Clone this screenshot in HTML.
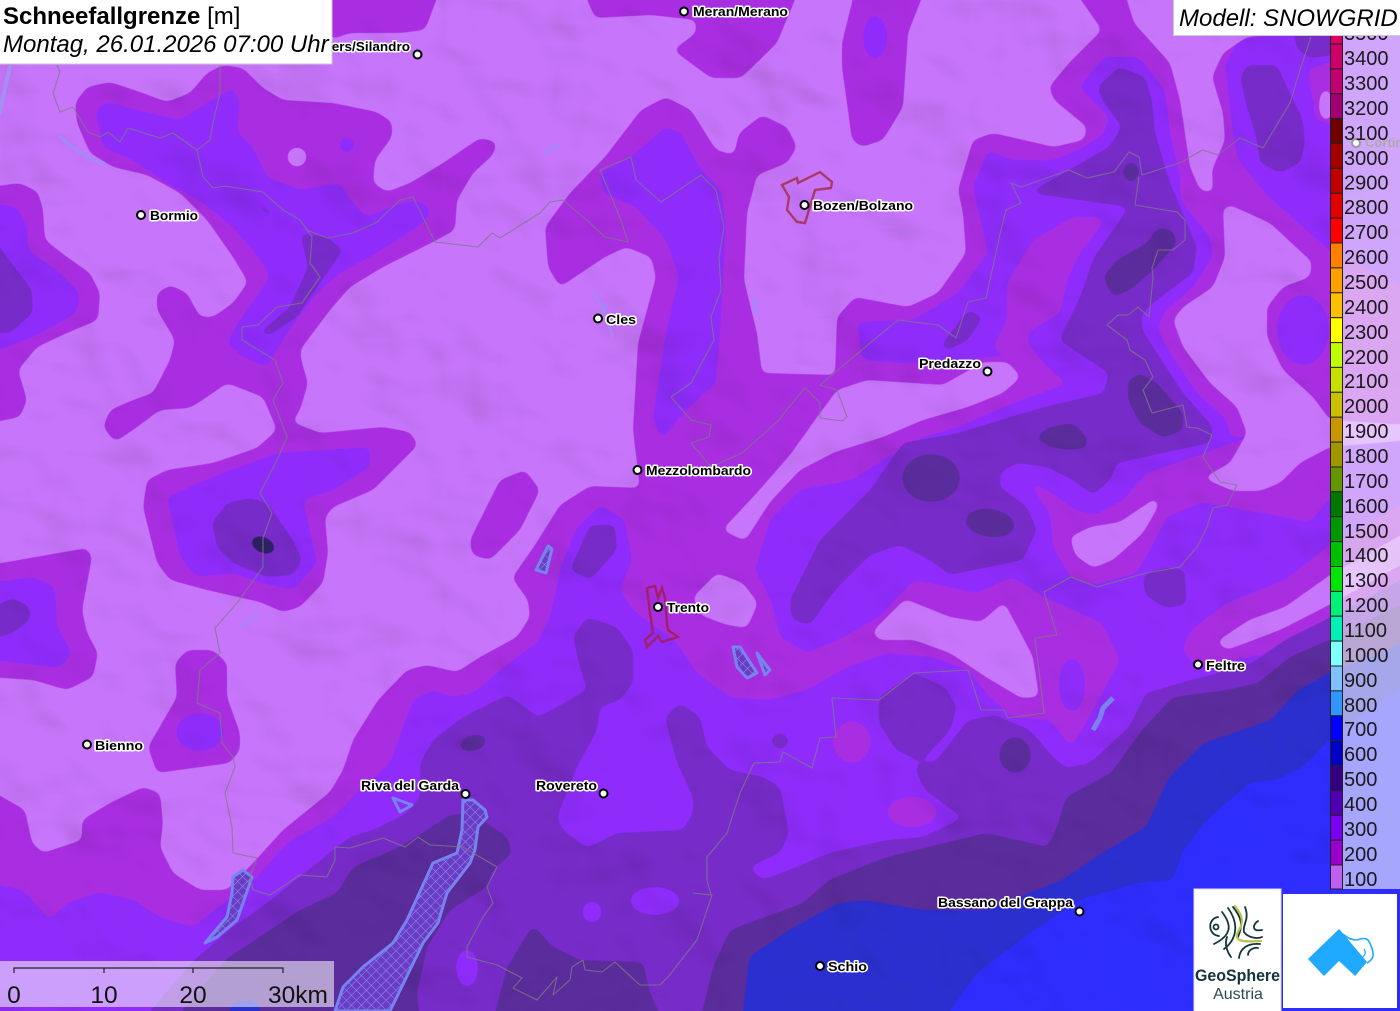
<!DOCTYPE html>
<html lang="de"><head><meta charset="utf-8"><title>Schneefallgrenze</title>
<style>
html,body{margin:0;padding:0;background:#c775fa;width:1400px;height:1011px;overflow:hidden}
svg{display:block;position:absolute;left:0;top:0}
text{font-family:"Liberation Sans",sans-serif}
.c{font-size:13px;font-weight:bold;fill:#000;stroke:#fff;stroke-width:3px;paint-order:stroke;stroke-linejoin:round}
.d{fill:#fff;stroke:#000;stroke-width:2}
.g text{font-size:20px;fill:#1a1a1a}
</style></head><body>
<svg width="1400" height="1011" viewBox="0 0 1400 1011" xmlns="http://www.w3.org/2000/svg">
<defs>
<filter id="s" filterUnits="userSpaceOnUse" x="-60" y="-60" width="1520" height="1131" color-interpolation-filters="sRGB">
<feGaussianBlur stdDeviation="4"/>
<feComponentTransfer><feFuncA type="linear" slope="9" intercept="-4"/></feComponentTransfer>
</filter>
<filter id="hs" filterUnits="userSpaceOnUse" x="0" y="0" width="1400" height="1011" color-interpolation-filters="sRGB">
<feTurbulence type="fractalNoise" baseFrequency="0.009 0.011" numOctaves="3" seed="11"/>
<feDiffuseLighting surfaceScale="9" diffuseConstant="1.16" lighting-color="#fff"><feDistantLight azimuth="135" elevation="60"/></feDiffuseLighting>
</filter>
<pattern id="h" width="7" height="7" patternUnits="userSpaceOnUse" patternTransform="rotate(45)">
<rect width="7" height="7" fill="#6a3cc4"/><path d="M0 0H7M0 0V7" stroke="#8f90f2" stroke-width="1.1"/>
</pattern>
</defs>
<rect width="1400" height="1011" fill="#c775fa"/>
<!-- 200 magenta -->
<g fill="#a92ee2" filter="url(#s)">
<polygon points="75,103 87,87 110,82 140,92 167,102 190,93 207,73 223,65 243,68 263,88 283,100 333,103 377,112 392,122 392,137 375,160 373,183 387,192 410,183 443,163 480,138 497,142 493,155 473,173 457,200 455,230 433,242 383,267 350,287 330,310 300,350 302,363 308,383 300,410 292,422 320,433 383,427 410,432 418,445 400,463 373,490 333,507 325,517 328,553 323,583 300,607 283,612 260,602 207,590 170,580 157,563 143,507 147,480 167,470 213,463 257,448 277,430 263,397 227,383 207,397 190,408 160,410 133,430 115,442 103,427 110,410 133,400 153,393 170,360 175,340 157,310 157,293 170,285 187,293 200,317 213,317 233,303 248,282 233,257 207,220 180,193 147,175 113,167 90,153 77,123"/>
<polygon points="-10,187 20,183 38,192 43,210 45,240 67,257 90,273 100,293 98,320 67,333 37,347 18,370 27,400 20,417 -10,423"/>
<polygon points="-10,565 87,548 92,557 82,610 87,633 98,653 93,677 67,690 33,680 -10,677"/>
<polygon points="175,663 187,650 213,650 227,663 227,697 240,733 240,750 230,763 157,773 148,747 177,697"/>
<polygon points="330,-10 440,-10 425,30 400,33 350,33 330,40"/>
<polygon points="583,-10 595,18 651,15 696,20 696,33 673,50 711,78 741,78 777,43 799,-10"/>
<polygon points="855,-10 842,43 842,67 852,140 862,147 883,140 903,107 908,33 925,-10"/>
<polygon points="470,540 500,480 525,470 540,490 520,530 490,560 472,555"/>
<polygon points="-10,790 25,810 32,843 43,853 82,840 82,820 110,803 143,787 160,793 163,823 160,847 173,873 200,890 227,890 253,863 283,830 330,792 343,770 353,740 378,700 407,670 427,665 457,672 480,657 517,637 530,617 528,600 512,578 535,545 560,505 590,486 640,488 633,430 638,343 656,277 651,257 626,247 605,257 560,287 548,267 545,227 570,193 605,157 641,110 666,97 691,110 716,150 734,155 739,133 762,115 787,127 797,147 787,163 757,175 747,213 744,280 757,333 762,373 835,375 837,317 855,297 908,307 938,293 966,253 963,213 958,190 973,140 993,133 1054,147 1084,140 1087,127 1054,100 1049,87 1069,63 1102,30 1074,-10 1410,-10 1410,1021 -10,1021"/>
</g>
<!-- 300 violet -->
<g fill="#8f2cfb" filter="url(#s)">
<polygon points="95,110 107,102 137,110 180,120 207,103 233,88 240,103 237,132 253,147 267,177 300,190 340,183 353,203 367,217 390,207 417,200 432,210 423,223 377,253 340,273 317,293 287,333 267,367 243,357 227,343 240,320 270,277 263,263 233,227 203,203 167,183 133,160 103,147"/>
<polygon points="-10,203 17,207 27,227 28,250 60,273 80,293 77,313 33,337 -10,353"/>
<polygon points="167,497 213,477 277,453 370,447 370,467 333,490 303,500 317,563 293,590 263,583 233,573 197,577 180,557"/>
<polygon points="-10,583 33,577 55,587 57,627 72,653 60,668 20,663 -10,660"/>
<ellipse cx="200" cy="732" rx="24" ry="19"/><ellipse cx="347" cy="145" rx="8" ry="8"/><ellipse cx="875" cy="37" rx="12" ry="22"/>
<polygon points="600,173 631,157 666,127 681,133 701,170 721,190 726,227 721,317 716,383 686,410 661,440 653,417 666,333 679,277 666,240 636,207 603,193"/>
<polygon points="-10,883 23,890 50,920 67,903 100,892 133,900 160,917 193,927 257,877 287,843 333,817 360,790 390,763 413,700 433,690 453,697 473,693 513,660 537,643 550,617 560,570 575,530 600,505 625,520 632,560 620,590 633,610 677,643 697,673 730,697 767,700 807,690 847,667 887,653 932,657 968,670 986,693 1012,717 1050,720 1071,747 1084,727 1102,693 1120,660 1102,623 1044,597 1012,577 977,593 914,580 879,617 838,640 807,653 780,637 771,600 755,570 770,520 800,490 852,480 883,460 923,437 958,427 1013,403 1069,383 1019,353 948,363 903,363 862,360 857,322 913,320 958,293 988,253 973,187 988,150 1013,160 1054,160 1084,147 1104,133 1109,117 1079,87 1104,57 1139,57 1165,90 1170,133 1180,177 1180,200 1210,237 1213,257 1193,287 1163,313 1158,330 1170,353 1197,393 1227,420 1230,437 1345,437 1410,440 1410,1021 -10,1021"/>
<polygon points="1225,65 1240,38 1410,30 1410,290 1329,250 1267,195 1238,160 1232,125"/>
</g>
<!-- magenta patches over violet -->
<g fill="#a92ee2" filter="url(#s)">
<polygon points="1027,480 1050,492 1075,510 1095,515 1123,500 1147,473 1200,455 1240,440 1300,430 1345,430 1345,480 1310,522 1203,502 1167,517 1137,573 1093,585 1070,577 1053,547 1050,513"/>
<polygon points="1182,650 1191,630 1227,603 1285,580 1329,545 1410,500 1410,590 1329,625 1280,650 1227,662 1195,665"/>
<polygon points="1007,283 1033,240 1073,217 1100,217 1103,223 1080,253 1067,280 1060,313 1027,333 1030,347 1050,370 1073,383 1020,373 993,347 1007,320"/>
<polygon points="1308,70 1335,60 1335,125 1316,120"/>
<ellipse cx="852" cy="742" rx="19" ry="21"/><ellipse cx="912" cy="812" rx="25" ry="15"/>
</g>
<g fill="#8f2cfb" filter="url(#s)"><ellipse cx="1072" cy="685" rx="13" ry="27"/><ellipse cx="1303" cy="330" rx="26" ry="35"/></g>
<!-- light islands -->
<g fill="#c775fa" filter="url(#s)">
<circle cx="297" cy="157" r="10"/>
<polygon points="837,390 867,380 943,385 983,362 1008,362 1021,377 1003,393 968,407 923,420 883,437 835,452 800,470 770,502 745,541 722,530 755,495 790,455 815,420"/>
<polygon points="693,597 717,573 743,583 758,603 747,628 727,625 700,615"/>
<polygon points="872,632 905,599 950,617 981,622 1004,602 1019,630 1033,657 1039,697 1021,698 986,677 950,653 914,640 879,640"/>
<polygon points="1070,537 1090,527 1120,522 1157,497 1158,507 1143,533 1113,560 1093,568 1075,555"/>
<polygon points="1230,205 1270,223 1312,262 1310,277 1283,287 1267,307 1267,337 1283,370 1313,397 1330,420 1410,425 1410,440 1330,447 1300,463 1280,483 1260,491 1233,491 1203,478 1230,463 1247,433 1237,407 1210,383 1183,347 1173,320 1183,307 1213,287 1225,257 1223,208"/>
<polygon points="1216,642 1249,620 1285,607 1330,575 1410,530 1410,560 1329,605 1280,630 1227,650"/>
<polygon points="1124,-10 1134,23 1170,63 1180,100 1190,167 1200,190 1213,193 1212,170 1225,140 1223,113 1212,77 1223,53 1247,37 1290,33 1300,-10"/>
<ellipse cx="1326" cy="105" rx="7" ry="16"/>
</g>
<!-- 400 dark purple -->
<g fill="#772bc9" filter="url(#s)">
<polygon points="142,1021 192,962 233,927 267,903 337,847 350,837 373,830 407,813 420,797 420,763 433,740 463,717 507,695 520,703 537,717 557,707 587,690 580,667 573,637 587,617 617,627 633,650 633,683 620,700 600,707 597,730 577,767 557,817 563,830 587,848 617,833 683,830 693,813 693,797 677,763 670,737 665,717 680,703 700,717 707,747 730,770 763,777 780,787 789,833 780,853 749,867 762,880 789,870 829,853 887,840 923,837 963,818 925,790 914,767 937,760 968,720 995,715 1030,730 1053,757 1066,768 1090,763 1129,727 1146,693 1191,680 1249,665 1285,640 1329,618 1410,575 1410,1021"/>
<polygon points="879,697 914,673 945,687 957,707 950,730 921,762 896,750 879,723"/>
<polygon points="1097,87 1119,67 1145,77 1152,100 1155,133 1170,183 1197,247 1193,273 1157,300 1142,313 1142,330 1157,353 1183,393 1213,427 1210,443 1163,453 1117,463 1110,480 1093,495 1073,480 1047,467 1017,463 1000,473 1000,487 1027,507 1037,530 1023,560 950,575 930,560 900,545 870,555 835,590 810,625 792,620 790,600 820,540 870,490 903,443 958,433 1044,407 1104,393 1109,373 1059,340 1079,300 1094,257 1129,207 1029,193 1074,167 1109,147 1122,127 1104,103"/>
<polygon points="1240,77 1247,65 1277,65 1287,87 1303,120 1305,143 1300,163 1280,173 1260,163 1257,140 1247,107"/>
<polygon points="1292,30 1335,30 1335,55 1310,58 1298,50"/>
<polygon points="212,523 227,503 250,498 267,503 293,540 302,560 293,575 267,577 233,563 217,547"/>
<polygon points="-10,608 13,598 30,607 30,620 13,633 -10,640"/>
<polygon points="-10,233 7,257 32,290 33,313 10,333 -10,333"/>
<polygon points="300,233 327,237 343,250 327,273 297,317 270,335 257,335 290,307 308,267"/>
<polygon points="252,202 262,204 278,216 268,216"/>
<polygon points="940,347 968,310 983,317 968,340 948,350"/>
<polygon points="1143,575 1165,567 1185,570 1186,605 1165,608 1145,595"/>
<polygon points="570,570 590,525 615,525 617,550 590,580"/>
<ellipse cx="780" cy="741" rx="9" ry="8"/>
</g>
<g fill="#8f2cfb" filter="url(#s)">
<ellipse cx="655" cy="901" rx="25" ry="14"/><ellipse cx="592" cy="912" rx="10" ry="11"/><ellipse cx="467" cy="968" rx="11" ry="19"/>
</g>
<!-- 500 -->
<g fill="#5a2c9c" filter="url(#s)">
<polygon points="174,1021 225,960 300,910 337,893 353,867 400,847 447,817 457,813 487,823 507,837 512,853 493,870 487,887 450,910 427,947 417,993 420,1021"/>
<polygon points="493,1021 507,967 533,925 553,947 580,960 643,962 650,993 663,1021"/>
<polygon points="700,1021 713,967 730,930 803,903 829,880 887,857 986,833 1048,847 1057,827 1066,797 1111,773 1142,730 1173,697 1227,690 1258,683 1290,657 1329,640 1410,600 1410,1021"/>
<polygon points="1103,277 1117,260 1147,243 1157,228 1173,230 1177,243 1153,270 1130,290 1113,297"/>
<polygon points="1128,380 1140,373 1157,383 1183,413 1183,430 1163,438 1140,423 1128,400"/>
<polygon points="1035,437 1050,427 1073,423 1087,437 1087,448 1067,450 1050,447"/>
<ellipse cx="990" cy="523" rx="25" ry="14" transform="rotate(8 990 523)"/>
<ellipse cx="931" cy="478" rx="29" ry="24"/>
<ellipse cx="1131" cy="172" rx="8" ry="10"/>
<ellipse cx="1015" cy="755" rx="16" ry="18"/>
<ellipse cx="473" cy="743" rx="14" ry="8" transform="rotate(-15 473 743)"/>
</g>
<g filter="url(#s)"><ellipse cx="263" cy="545" rx="13" ry="8" transform="rotate(25 263 545)" fill="#2e1f66"/></g>
<!-- blues -->
<g fill="#2b2fcf" filter="url(#s)">
<polygon points="742,1021 749,957 789,930 838,903 865,900 923,910 986,910 1062,880 1102,853 1146,827 1169,777 1204,743 1271,720 1298,690 1329,673 1410,640 1410,1021"/>
<ellipse cx="245" cy="1012" rx="16" ry="13"/>
</g>
<g fill="#2e2dff" filter="url(#s)">
<polygon points="943,1021 977,973 1030,933 1079,900 1137,883 1173,880 1182,853 1204,823 1249,783 1276,780 1303,767 1329,740 1410,680 1410,1021"/>
</g>
<!-- hillshade -->
<rect width="1400" height="1011" filter="url(#hs)" style="mix-blend-mode:multiply" opacity=".38"/>
<!-- water streaks -->
<g fill="none" stroke="#a08cf8" stroke-linecap="round" stroke-linejoin="round" opacity=".75">
<path d="M10 67 Q4 90 0 113" stroke-width="4" stroke="#9d98f8"/>
<path d="M60 137 Q80 155 103 163" stroke-width="4"/>
<path d="M594 293 Q606 310 612 336M606 305 L602 318" stroke-width="3"/>
<path d="M546 152 L557 146" stroke-width="5" opacity=".7"/>
<path d="M755 300 L756 312" stroke-width="6" opacity=".7"/>
<path d="M242 627 L256 616" stroke-width="6" opacity=".6"/>
</g>
<!-- lakes -->
<g fill="url(#h)" stroke="#7883ee" stroke-width="3" stroke-linejoin="round">
<polygon points="463,800 473,800 485,810 487,817 478,827 475,850 470,863 447,893 438,923 423,943 390,1011 335,1011 343,987 363,967 393,943 407,920 433,863 457,853 462,830"/>
<polygon points="233,877 243,870 252,877 243,903 237,920 217,937 205,943 227,917 232,893"/>
<polygon points="733,647 740,647 757,673 747,678 737,667"/>
<polygon points="757,653 770,670 765,675"/>
<polygon points="536,570 548,546 552,549 546,573"/>
<polygon points="393,798 412,805 400,812" fill="none"/>
<path d="M1093 730 L1100 718 L1103 708 L1113 698" fill="none" stroke-width="5"/>
</g>
<!-- borders -->
<g fill="none" stroke="#7d7a86" stroke-width="1.1" stroke-linejoin="round" opacity=".8">
<polyline points="57,65 60,72 53,93 60,112 73,107 88,132 100,137 108,132 120,142 128,128 160,138 173,133 197,150 210,140 213,123 220,93 220,65"/>
<polyline points="197,150 203,177 213,188 225,186 263,192 283,210 300,220 307,230 327,238 353,233 377,222 400,200 413,197 435,242 478,247 492,233 500,238 540,213 550,202 563,200 590,223 605,237 628,242 621,220 600,170 631,157 636,180 661,202 701,175 716,190 724,227 719,257 721,290 711,317 714,340 691,383 671,397 691,420 711,425 709,437 691,443 711,467 742,453 777,422 789,407 805,388 820,403 820,418 842,421 847,417 837,390 820,385 852,358 898,320 938,325 956,338 968,302 986,298 1001,230 1006,210 1021,203 1011,183 1021,187 1069,170 1087,178 1114,172 1129,152 1139,157 1142,175 1182,162 1202,150 1218,155 1240,138 1263,148 1290,103 1301,67 1311,37"/>
<polyline points="1139,177 1135,205 1177,212 1185,220 1185,240 1173,250 1158,250 1152,268 1153,277 1149,317 1138,307 1128,315 1118,315 1107,325 1127,340 1130,350 1145,360 1153,377 1143,390 1152,413 1183,405 1187,427 1197,428 1212,435 1203,457 1220,482 1237,485 1227,505 1213,508 1207,527 1197,547 1180,567 1146,573 1097,587 1071,577 1044,592 1057,635 1035,638 1044,713 1008,718 1004,710 981,710 968,670 914,673 879,700 832,698 836,737 820,738 812,768 783,752 780,762 754,763 740,793 727,833 707,857 707,880 711,895 693,893 712,895 697,940 668,977 660,985 640,985 615,962 602,972 585,970 583,960 572,967 570,980 553,995 557,977 537,1000 513,988 522,978 497,965 467,957 467,947 483,917 493,903 487,887 497,867 463,847 430,845 418,837 405,847 383,838 350,848 335,847 335,860 327,877 300,875 270,895 253,890 250,877 257,858 233,853 232,827 225,793 235,767 233,757 222,743 220,713 197,703 200,670 220,653 215,628 237,603 263,567 263,538 272,513 260,493 277,460 287,437 273,400 283,383 275,360 242,340 242,327 258,325 277,307 302,303 320,277 310,263 312,237 307,230"/>
</g>
<!-- city outlines -->
<polygon points="782,185 797,178 798,183 820,172 832,182 831,188 815,190 805,223 797,222 787,210 789,197" fill="none" stroke="#a83a6a" stroke-width="2.4"/>
<polygon points="647,588 655,586 658,598 662,588 665,598 667,623 668,630 678,637 662,642 658,636 647,647 645,640 653,633 650,613" fill="none" stroke="#a0206a" stroke-width="2.4"/>
<!-- cities -->
<circle class="d" cx="684" cy="11.5" r="4"/><text class="c" x="693" y="16" textLength="95" lengthAdjust="spacingAndGlyphs">Meran/Merano</text>
<circle class="d" cx="417.500" cy="54.500" r="4"/><text class="c" x="279" y="51" textLength="131" lengthAdjust="spacingAndGlyphs">Schlanders/Silandro</text>
<circle class="d" cx="141" cy="215" r="4"/><text class="c" x="150" y="220" textLength="48" lengthAdjust="spacingAndGlyphs">Bormio</text>
<circle class="d" cx="804.500" cy="205" r="4"/><text class="c" x="813" y="210" textLength="100" lengthAdjust="spacingAndGlyphs">Bozen/Bolzano</text>
<circle class="d" cx="598" cy="318.500" r="4"/><text class="c" x="606" y="324" textLength="30" lengthAdjust="spacingAndGlyphs">Cles</text>
<circle class="d" cx="987.500" cy="371.500" r="4"/><text class="c" x="919" y="368" textLength="62" lengthAdjust="spacingAndGlyphs">Predazzo</text>
<circle class="d" cx="637.500" cy="470" r="4"/><text class="c" x="646" y="475" textLength="105" lengthAdjust="spacingAndGlyphs">Mezzolombardo</text>
<circle class="d" cx="658" cy="607" r="4"/><text class="c" x="667" y="612" textLength="42" lengthAdjust="spacingAndGlyphs">Trento</text>
<circle class="d" cx="1198" cy="664.500" r="4"/><text class="c" x="1206" y="670" textLength="39" lengthAdjust="spacingAndGlyphs">Feltre</text>
<circle class="d" cx="87" cy="744.500" r="4"/><text class="c" x="95" y="750" textLength="48" lengthAdjust="spacingAndGlyphs">Bienno</text>
<circle class="d" cx="465.500" cy="794" r="4"/><text class="c" x="361" y="790" textLength="98" lengthAdjust="spacingAndGlyphs">Riva del Garda</text>
<circle class="d" cx="603.500" cy="793.500" r="4"/><text class="c" x="536" y="790" textLength="61" lengthAdjust="spacingAndGlyphs">Rovereto</text>
<circle class="d" cx="1079.500" cy="911.500" r="4"/><text class="c" x="938" y="907" textLength="135" lengthAdjust="spacingAndGlyphs">Bassano del Grappa</text>
<circle class="d" cx="820" cy="966" r="4"/><text class="c" x="828" y="971" textLength="39" lengthAdjust="spacingAndGlyphs">Schio</text>
<!-- scale bar -->
<rect x="0" y="961" width="334" height="46" fill="#fff" opacity=".55"/>
<path d="M14 973V968H283V973M104 968V973M193 968V973" fill="none" stroke="#222" stroke-width="1.2"/>
<g fill="#111" style="font-size:24.500px">
<text x="14" y="1003" text-anchor="middle">0</text><text x="104" y="1003" text-anchor="middle">10</text><text x="193" y="1003" text-anchor="middle">20</text><text x="268" y="1003">30km</text>
</g>
<!-- legend -->
<rect x="1343" y="36" width="57" height="853" fill="#fff" opacity=".58"/>
<circle cx="1356" cy="143" r="4" fill="#fff" stroke="#999" stroke-width="2"/><text x="1365" y="147" style="font-size:13px;font-weight:bold" fill="#aaa">Cortina</text>
<g class="g" stroke="none">
<text x="1344" y="40">3500</text><text x="1344" y="65">3400</text><text x="1344" y="90">3300</text><text x="1344" y="115">3200</text><text x="1344" y="140">3100</text><text x="1344" y="165">3000</text><text x="1344" y="189.500">2900</text><text x="1344" y="214">2800</text><text x="1344" y="239">2700</text><text x="1344" y="264">2600</text><text x="1344" y="289">2500</text><text x="1344" y="314">2400</text><text x="1344" y="339">2300</text><text x="1344" y="364">2200</text><text x="1344" y="388">2100</text><text x="1344" y="413">2000</text><text x="1344" y="438">1900</text><text x="1344" y="463">1800</text><text x="1344" y="488">1700</text><text x="1344" y="513">1600</text><text x="1344" y="538">1500</text><text x="1344" y="562">1400</text><text x="1344" y="587">1300</text><text x="1344" y="612">1200</text><text x="1344" y="637">1100</text><text x="1344" y="662">1000</text><text x="1344" y="687">900</text><text x="1344" y="712">800</text><text x="1344" y="736">700</text><text x="1344" y="761">600</text><text x="1344" y="786">500</text><text x="1344" y="811">400</text><text x="1344" y="836">300</text><text x="1344" y="861">200</text><text x="1344" y="886">100</text>
</g>
<g stroke="#222" stroke-width="1">
<rect x="1330.500" y="30" width="12" height="14" fill="#d80060"/>
<rect x="1330.500" y="44" width="12" height="24.900" fill="#cc0066"/>
<rect x="1330.500" y="68.900" width="12" height="24.900" fill="#c20070"/>
<rect x="1330.500" y="93.800" width="12" height="24.800" fill="#a00072"/>
<rect x="1330.500" y="118.600" width="12" height="24.900" fill="#700000"/>
<rect x="1330.500" y="143.500" width="12" height="24.900" fill="#a50000"/>
<rect x="1330.500" y="168.400" width="12" height="24.900" fill="#c00000"/>
<rect x="1330.500" y="193.300" width="12" height="24.900" fill="#e00000"/>
<rect x="1330.500" y="218.200" width="12" height="24.800" fill="#ff0000"/>
<rect x="1330.500" y="243" width="12" height="24.900" fill="#ff8000"/>
<rect x="1330.500" y="267.900" width="12" height="24.900" fill="#ffa000"/>
<rect x="1330.500" y="292.800" width="12" height="24.900" fill="#ffc000"/>
<rect x="1330.500" y="317.700" width="12" height="24.900" fill="#ffff00"/>
<rect x="1330.500" y="342.600" width="12" height="24.800" fill="#c0ff00"/>
<rect x="1330.500" y="367.400" width="12" height="24.900" fill="#c8e000"/>
<rect x="1330.500" y="392.300" width="12" height="24.900" fill="#c8c000"/>
<rect x="1330.500" y="417.200" width="12" height="24.900" fill="#c89600"/>
<rect x="1330.500" y="442.100" width="12" height="24.900" fill="#a09600"/>
<rect x="1330.500" y="467" width="12" height="24.800" fill="#649600"/>
<rect x="1330.500" y="491.800" width="12" height="24.900" fill="#007800"/>
<rect x="1330.500" y="516.700" width="12" height="24.900" fill="#009600"/>
<rect x="1330.500" y="541.600" width="12" height="24.900" fill="#00be00"/>
<rect x="1330.500" y="566.500" width="12" height="24.900" fill="#00e600"/>
<rect x="1330.500" y="591.400" width="12" height="24.800" fill="#00f078"/>
<rect x="1330.500" y="616.200" width="12" height="24.900" fill="#00f0b8"/>
<rect x="1330.500" y="641.100" width="12" height="24.900" fill="#80ffff"/>
<rect x="1330.500" y="666" width="12" height="24.900" fill="#80c0ff"/>
<rect x="1330.500" y="690.900" width="12" height="24.900" fill="#3296ff"/>
<rect x="1330.500" y="715.800" width="12" height="24.800" fill="#0000ff"/>
<rect x="1330.500" y="740.600" width="12" height="24.900" fill="#0000c8"/>
<rect x="1330.500" y="765.500" width="12" height="24.900" fill="#320080"/>
<rect x="1330.500" y="790.400" width="12" height="24.900" fill="#5000b0"/>
<rect x="1330.500" y="815.300" width="12" height="24.900" fill="#7a00f0"/>
<rect x="1330.500" y="840.200" width="12" height="24.800" fill="#9900cc"/>
<rect x="1330.500" y="865" width="12" height="24" fill="#c060f0"/>
</g>
<!-- title boxes -->
<rect x="-1" y="-1" width="333" height="65" fill="#fff" stroke="#ccc"/>
<text x="3" y="24" style="font-size:24px"><tspan font-weight="bold">Schneefallgrenze</tspan> [m]</text>
<text x="3" y="52" style="font-size:24px;font-style:italic">Montag, 26.01.2026 07:00 Uhr</text>
<rect x="1173.500" y="-1" width="227" height="36.500" fill="#fff" stroke="#ccc"/>
<text x="1179" y="26" style="font-size:24px;font-style:italic">Modell: SNOWGRID</text>
<!-- GeoSphere logo -->
<rect x="1194" y="889" width="87" height="123" fill="#fff" stroke="#dcdcf4"/>
<g fill="none" stroke="#12343b" stroke-width="1.8" stroke-linecap="round">
<circle cx="1216" cy="927" r="2.500"/>
<path d="M1218 917C1207 919 1208 935 1219 936"/>
<path d="M1222 912C1232 925 1232 935 1214 944"/>
<path d="M1228 908C1240 925 1236 940 1224 949"/>
<path d="M1227 937C1224 945 1228 953 1231 957"/>
<path d="M1233 907C1242 918 1243 925 1238 937"/>
<path d="M1245 907C1250 920 1242 925 1244 932C1248 938 1258 939 1262 937"/>
<path d="M1258 921C1252 925 1252 932 1262 930"/>
<path d="M1239 958C1240 948 1248 943 1260 944"/>
<path d="M1248 955C1248 950 1254 947 1258 948"/>
</g>
<path d="M1235 906C1243 916 1244 922 1238 932C1233 942 1245 942 1261 941" fill="none" stroke="#b9c34a" stroke-width="2.200" stroke-linecap="round"/>
<text x="1237.500" y="981" text-anchor="middle" textLength="85" lengthAdjust="spacingAndGlyphs" style="font-size:17px;font-weight:bold" fill="#12343b">GeoSphere</text>
<text x="1238" y="999" text-anchor="middle" style="font-size:16px" fill="#2b4a50">Austria</text>
<!-- Snow logo -->
<rect x="1283" y="894" width="114" height="114" fill="#fff"/>
<polygon points="1309,959 1339,930 1366,962 1355,975 1339,960 1324,975" fill="#1fa9ff" stroke="#1fa9ff" stroke-linejoin="round" stroke-width="1.500"/>
<path d="M1343 934Q1349 940 1357 940Q1365 937 1368 940Q1372 946 1373 953Q1374 959 1367 963" fill="none" stroke="#1fa9ff" stroke-width="1.600" stroke-linejoin="round"/>
<path d="M1364 949Q1367 953 1363 957" fill="none" stroke="#1fa9ff" stroke-width="1.200"/>
</svg>
</body></html>
